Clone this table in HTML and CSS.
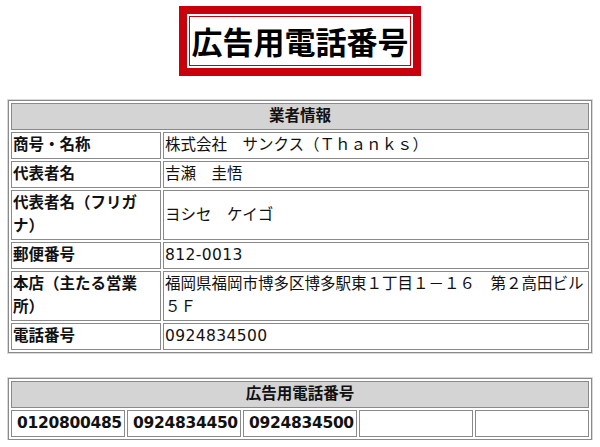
FILE: index.html
```html
<!DOCTYPE html>
<html lang="ja">
<head>
<meta charset="utf-8">
<title>広告用電話番号</title>
<link rel="stylesheet" href="styles.css">
</head>
<body>
<div class="page">
  <div class="title-row">
    <div class="title"><div class="title-inner">広告用電話番号</div></div>
  </div>

  <table class="info">
    <colgroup><col class="c-label"><col></colgroup>
    <tr><th colspan="2" class="head">業者情報</th></tr>
    <tr><th>商号・名称</th><td>株式会社　サンクス（Ｔｈａｎｋｓ）</td></tr>
    <tr><th>代表者名</th><td>吉瀬　圭悟</td></tr>
    <tr><th>代表者名（フリガナ）</th><td>ヨシセ　ケイゴ</td></tr>
    <tr><th>郵便番号</th><td class="num">812-0013</td></tr>
    <tr><th>本店（主たる営業所）</th><td>福岡県福岡市博多区博多駅東１丁目１－１６　第２高田ビル５Ｆ</td></tr>
    <tr><th>電話番号</th><td class="num">0924834500</td></tr>
  </table>

  <table class="phones">
    <tr><th colspan="5" class="head">広告用電話番号</th></tr>
    <tr><td>0120800485</td><td>0924834450</td><td>0924834500</td><td></td><td></td></tr>
  </table>
</div>
</body>
</html>
```

FILE: styles.css
```css
html, body {
  margin: 0;
  padding: 0;
  background: #ffffff;
}

.page {
  padding: 6px 8px 0 8px;
  font-family: "DejaVu Sans", "Noto Sans CJK JP", sans-serif;
  font-size: 15.5px;
  color: #111;
}

.title-row {
  display: flex;
  justify-content: center;
}

.title {
  border: 8px solid #c8000c;
  padding: 2px;
  background: #fff;
}

.title-inner {
  border: 1px solid #c8000c;
  width: 220px;
  height: 48px;
  line-height: 48px;
  text-align: center;
  font-family: "Noto Sans CJK JP", sans-serif;
  font-weight: 700;
  font-size: 31px;
  color: #000;
}

table {
  width: 584px;
  border-collapse: separate;
  border-spacing: 2px;
  border: 1px solid #8a8a8a;
  box-shadow: 0 0 0 1px #d8d8d8;
  table-layout: fixed;
}

.info {
  margin-top: 24px;
}

.phones {
  margin-top: 25px;
}

.c-label {
  width: 150px;
}

th, td {
  border: 1px solid #8a8a8a;
  padding: 1px 1px;
  line-height: 23px;
  text-align: left;
  vertical-align: middle;
  font-weight: 400;
}

th {
  font-weight: 700;
}

th.head {
  background: #d4d4d4;
  text-align: center;
}

.num {
  letter-spacing: 0.4px;
}

.phones td {
  font-weight: 700;
  padding-left: 5px;
  height: 23px;
  letter-spacing: -0.3px;
}
```
